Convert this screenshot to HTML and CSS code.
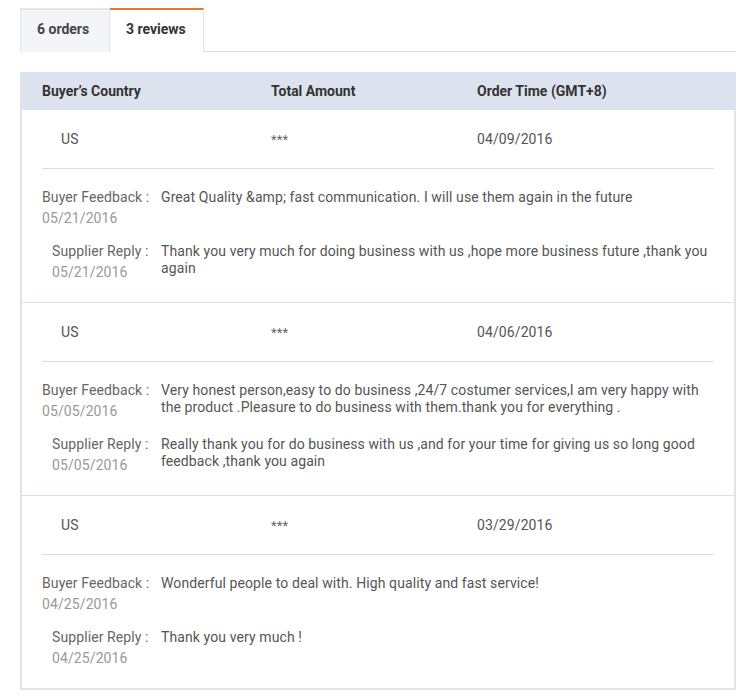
FILE: index.html
```html
<!DOCTYPE html>
<html lang="en">
<head>
    <meta charset="UTF-8">
    <title>Reviews</title>
    <link rel="stylesheet" href="styles.css">
</head>
<body>

<div class="tabs">
    <div class="tab">6 orders</div>
    <div class="tab active">3 reviews</div>
</div>

<div class="records">
    <div class="head">
        <div class="col-country">Buyer’s Country</div>
        <div class="col-amount">Total Amount</div>
        <div class="col-time">Order Time (GMT+8)</div>
    </div>

    <div class="record">
        <div class="summary">
            <div class="col-country">US</div>
            <div class="col-amount">***</div>
            <div class="col-time">04/09/2016</div>
        </div>
        <div class="feedback">
            <div class="label">Buyer Feedback :<span class="date">05/21/2016</span></div>
            <div class="text">Great Quality &amp;amp; fast communication. I will use them again in the future</div>
        </div>
        <div class="feedback reply">
            <div class="label">Supplier Reply :<span class="date">05/21/2016</span></div>
            <div class="text">Thank you very much for doing business with us ,hope more business future ,thank you again</div>
        </div>
    </div>

    <div class="record">
        <div class="summary">
            <div class="col-country">US</div>
            <div class="col-amount">***</div>
            <div class="col-time">04/06/2016</div>
        </div>
        <div class="feedback">
            <div class="label">Buyer Feedback :<span class="date">05/05/2016</span></div>
            <div class="text">Very honest person,easy to do business ,24/7 costumer services,I am very happy with the product .Pleasure to do business with them.thank you for everything .</div>
        </div>
        <div class="feedback reply">
            <div class="label">Supplier Reply :<span class="date">05/05/2016</span></div>
            <div class="text">Really thank you for do business with us ,and for your time for giving us so long good feedback ,thank you again</div>
        </div>
    </div>

    <div class="record">
        <div class="summary">
            <div class="col-country">US</div>
            <div class="col-amount">***</div>
            <div class="col-time">03/29/2016</div>
        </div>
        <div class="feedback">
            <div class="label">Buyer Feedback :<span class="date">04/25/2016</span></div>
            <div class="text">Wonderful people to deal with. High quality and fast service!</div>
        </div>
        <div class="feedback reply">
            <div class="label">Supplier Reply :<span class="date">04/25/2016</span></div>
            <div class="text">Thank you very much !</div>
        </div>
    </div>
</div>

</body>
</html>
```

FILE: styles.css
```css
body {
    margin: 0;
    padding: 8px 8px 0 20px;
    font-family: Roboto, "Liberation Sans", Arial, sans-serif;
    font-size: 14px;
    letter-spacing: 0.1px;
    color: #555;
    background: #fff;
}

.tabs {
    display: flex;
    width: 716px;
    height: 43px;
    border-bottom: 1px solid #ddd;
}
.tab {
    box-sizing: border-box;
    height: 44px;
    padding: 0 16px;
    line-height: 39px;
    font-size: 14px;
    letter-spacing: 0;
    font-weight: bold;
    color: #444;
    background: #f4f5f8;
    border: 1px solid #e6e6e6;
    border-bottom: none;
    border-top-width: 2px;
}
.tab:first-child {
    width: 90px;
}
.tab.active {
    width: 94px;
    background: #fff;
    color: #333;
    border-color: #e2e2e2;
    border-top-color: #e8762d;
    border-left: none;
}

.records {
    width: 716px;
    margin-top: 20px;
    box-sizing: border-box;
    border: 2px solid #e2e4e6;
    border-top: none;
}
.head {
    display: flex;
    height: 38px;
    align-items: center;
    margin: 0 -2px;
    padding: 0 0 0 22px;
    background: #dde3ee;
    font-weight: bold;
    font-size: 14px;
    letter-spacing: 0;
    color: #333;
}
.col-country {
    width: 229px;
}
.col-amount {
    width: 206px;
}

.record {
    padding: 0 20px;
    border-top: 1px solid #d6e2e4;
}
.head + .record {
    border-top: none;
}
.summary {
    display: flex;
    align-items: center;
    height: 58px;
    border-bottom: 1px solid #ddd;
}
.summary .col-country {
    padding-left: 19px;
    width: 210px;
}
.summary .col-amount {
    color: #666;
    font-size: 13px;
}

.feedback {
    display: flex;
    line-height: 17px;
    padding-top: 20px;
}
.feedback.reply {
    padding-top: 16px;
    padding-bottom: 21px;
}
.label {
    width: 119px;
    flex-shrink: 0;
    color: #666;
}
.reply .label {
    width: 109px;
    padding-left: 10px;
}
.date {
    display: block;
    margin-top: 4px;
    color: #999;
}
.text {
    flex: 1;
    color: #555;
}
```
